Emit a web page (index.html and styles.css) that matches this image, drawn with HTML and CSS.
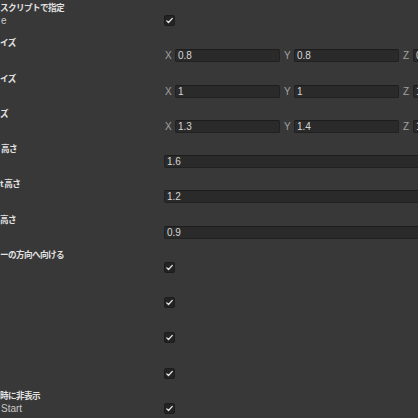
FILE: index.html
```html
<!DOCTYPE html>
<html lang="ja">
<head>
<meta charset="utf-8">
<link rel="stylesheet" href="styles.css">
</head>
<body>
<div class="inspector">
  <div class="prop">
    <div class="prop-title">スクリプトで指定</div>
    <div class="prop-row"><span class="prop-label">e</span><div class="control"><span class="check"><svg viewBox="0 0 11 11" width="11" height="11"><path d="M2.8 5.9 L4.5 7.5 L8.3 3.4" fill="none" stroke="#e8e8e8" stroke-width="1.3" stroke-linecap="round" stroke-linejoin="round"/></svg></span></div></div>
  </div>
  <div class="prop">
    <div class="prop-title">イズ</div>
    <div class="prop-row"><span class="prop-label"></span><div class="control vec">
      <div class="comp"><span class="axis">X</span><span class="field">0.8</span></div>
      <div class="comp"><span class="axis">Y</span><span class="field">0.8</span></div>
      <div class="comp"><span class="axis">Z</span><span class="field">0.8</span></div>
    </div></div>
  </div>
  <div class="prop">
    <div class="prop-title">イズ</div>
    <div class="prop-row"><span class="prop-label"></span><div class="control vec">
      <div class="comp"><span class="axis">X</span><span class="field">1</span></div>
      <div class="comp"><span class="axis">Y</span><span class="field">1</span></div>
      <div class="comp"><span class="axis">Z</span><span class="field">1</span></div>
    </div></div>
  </div>
  <div class="prop">
    <div class="prop-title">ズ</div>
    <div class="prop-row"><span class="prop-label"></span><div class="control vec">
      <div class="comp"><span class="axis">X</span><span class="field">1.3</span></div>
      <div class="comp"><span class="axis">Y</span><span class="field">1.4</span></div>
      <div class="comp"><span class="axis">Z</span><span class="field">1</span></div>
    </div></div>
  </div>
  <div class="prop">
    <div class="prop-title indent">高さ</div>
    <div class="prop-row"><span class="prop-label"></span><div class="control"><span class="field wide">1.6</span></div></div>
  </div>
  <div class="prop">
    <div class="prop-title">t 高さ</div>
    <div class="prop-row"><span class="prop-label"></span><div class="control"><span class="field wide">1.2</span></div></div>
  </div>
  <div class="prop">
    <div class="prop-title">高さ</div>
    <div class="prop-row"><span class="prop-label"></span><div class="control"><span class="field wide">0.9</span></div></div>
  </div>
  <div class="prop">
    <div class="prop-title">ーの方向へ向ける</div>
    <div class="prop-row"><span class="prop-label"></span><div class="control"><span class="check"><svg viewBox="0 0 11 11" width="11" height="11"><path d="M2.8 5.9 L4.5 7.5 L8.3 3.4" fill="none" stroke="#e8e8e8" stroke-width="1.3" stroke-linecap="round" stroke-linejoin="round"/></svg></span></div></div>
  </div>
  <div class="prop">
    <div class="prop-title"></div>
    <div class="prop-row"><span class="prop-label"></span><div class="control"><span class="check"><svg viewBox="0 0 11 11" width="11" height="11"><path d="M2.8 5.9 L4.5 7.5 L8.3 3.4" fill="none" stroke="#e8e8e8" stroke-width="1.3" stroke-linecap="round" stroke-linejoin="round"/></svg></span></div></div>
  </div>
  <div class="prop">
    <div class="prop-title"></div>
    <div class="prop-row"><span class="prop-label"></span><div class="control"><span class="check"><svg viewBox="0 0 11 11" width="11" height="11"><path d="M2.8 5.9 L4.5 7.5 L8.3 3.4" fill="none" stroke="#e8e8e8" stroke-width="1.3" stroke-linecap="round" stroke-linejoin="round"/></svg></span></div></div>
  </div>
  <div class="prop">
    <div class="prop-title"></div>
    <div class="prop-row"><span class="prop-label"></span><div class="control"><span class="check"><svg viewBox="0 0 11 11" width="11" height="11"><path d="M2.8 5.9 L4.5 7.5 L8.3 3.4" fill="none" stroke="#e8e8e8" stroke-width="1.3" stroke-linecap="round" stroke-linejoin="round"/></svg></span></div></div>
  </div>
  <div class="prop">
    <div class="prop-title">時に非表示</div>
    <div class="prop-row"><span class="prop-label">Start</span><div class="control"><span class="check"><svg viewBox="0 0 11 11" width="11" height="11"><path d="M2.8 5.9 L4.5 7.5 L8.3 3.4" fill="none" stroke="#e8e8e8" stroke-width="1.3" stroke-linecap="round" stroke-linejoin="round"/></svg></span></div></div>
  </div>
</div>
</body>
</html>
```

FILE: styles.css
```css
html, body {
  margin: 0;
  padding: 0;
  background: #383838;
  width: 418px;
  height: 418px;
  overflow: hidden;
}

.inspector {
  display: flex;
  flex-direction: column;
  font-family: "Liberation Sans", "Noto Sans CJK JP", sans-serif;
  font-size: 10px;
}

.prop {
  height: 35.27px;
  flex: none;
  display: flex;
  flex-direction: column;
}

.prop-title {
  height: 14px;
  line-height: 14px;
  font-family: "Noto Sans CJK JP", sans-serif;
  font-size: 8.6px;
  letter-spacing: -0.6px;
  font-weight: 700;
  color: #e2e2e2;
  white-space: nowrap;
}

.prop-title.indent {
  padding-left: 1px;
}

.prop-row {
  height: 13px;
  display: flex;
  align-items: center;
}

.prop-label {
  width: 164px;
  flex: none;
  box-sizing: border-box;
  padding-left: 1px;
  font-size: 10px;
  color: #cacaca;
  white-space: nowrap;
}

.control {
  flex: none;
  display: flex;
  align-items: center;
}

.vec {
  gap: 3px;
}

.comp {
  display: flex;
  align-items: center;
  flex: none;
}

.axis {
  width: 11px;
  flex: none;
  box-sizing: border-box;
  padding-left: 1px;
  color: #a2a2a2;
  font-size: 10px;
}

.field {
  width: 105px;
  height: 13px;
  box-sizing: border-box;
  flex: none;
  background: #2a2a2a;
  border: 1px solid #212121;
  border-top-color: #1c1c1c;
  border-radius: 2px;
  padding-left: 2px;
  color: #d6d6d6;
  font-size: 10px;
  line-height: 11px;
}

.field.wide {
  width: 270px;
}

.check {
  width: 11px;
  height: 11px;
  box-sizing: border-box;
  background: #232323;
  border: 1px solid #1c1c1c;
  border-radius: 2px;
  display: flex;
  align-items: center;
  justify-content: center;
}

.check svg {
  display: block;
  flex: none;
}
```
